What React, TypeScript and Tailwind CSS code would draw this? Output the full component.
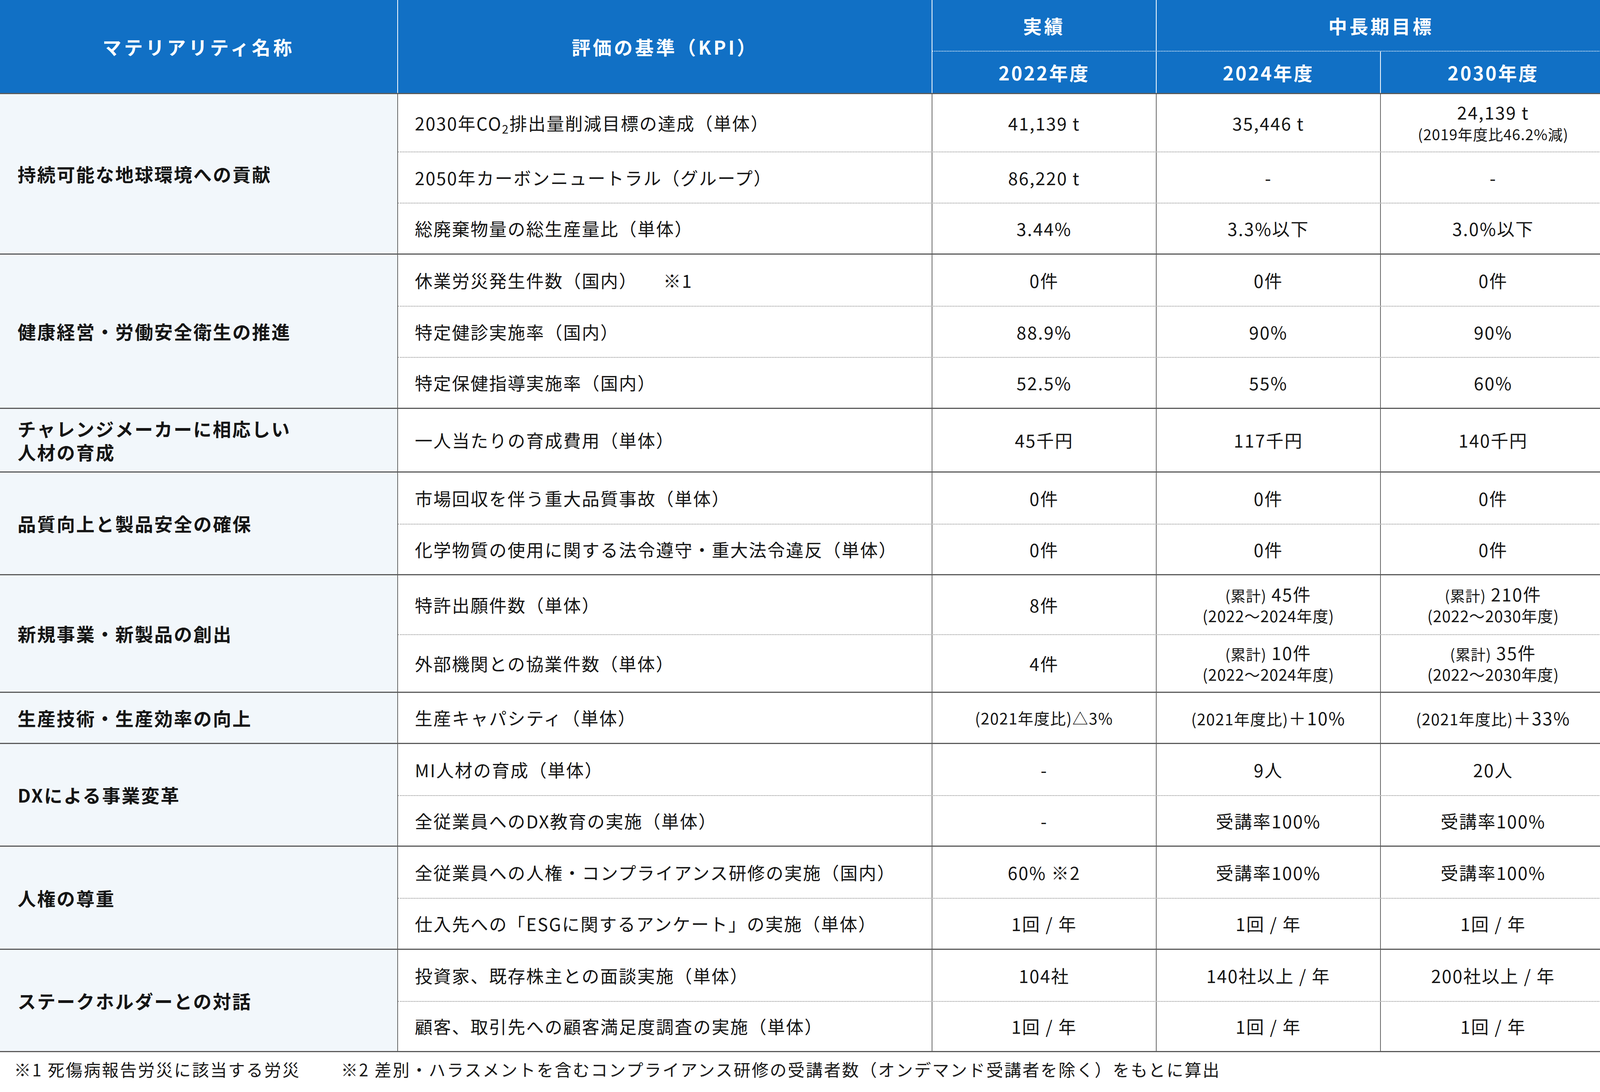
import React from "react";

type Cell = React.ReactNode;
type RowData = { h: string; kpi: Cell; v: [Cell, Cell, Cell] };
type Group = { label: Cell; rows: RowData[] };

const Pre = ({ children }: { children: React.ReactNode }) => (
  <span className="text-[40px] tracking-[1.5px]">{children}</span>
);

const Cum = ({ main, range }: { main: string; range: string }) => (
  <div className="flex flex-col items-center leading-[52px]">
    <div>
      <span className="text-[38px] tracking-[1px]">(累計)</span> {main}
    </div>
    <div className="text-[40px] tracking-[1px]">{range}</div>
  </div>
);

const groups: Group[] = [
  {
    label: "持続可能な地球環境への貢献",
    rows: [
      {
        h: "h-[147px]",
        kpi: (
          <>
            2030年CO<sub className="text-[30px] relative top-[8px] align-baseline">2</sub>排出量削減目標の達成（単体）
          </>
        ),
        v: [
          "41,139 t",
          "35,446 t",
          <div className="flex flex-col items-center leading-[56px]">
            <div>24,139 t</div>
            <div className="text-[38px] tracking-[1px]">(2019年度比46.2%減)</div>
          </div>,
        ],
      },
      { h: "h-[131px]", kpi: "2050年カーボンニュートラル（グループ）", v: ["86,220 t", "-", "-"] },
      { h: "h-[130px]", kpi: "総廃棄物量の総生産量比（単体）", v: ["3.44%", "3.3%以下", "3.0%以下"] },
    ],
  },
  {
    label: "健康経営・労働安全衛生の推進",
    rows: [
      {
        h: "h-[131px]",
        kpi: (
          <>
            休業労災発生件数（国内）<span className="ml-[66px]">※1</span>
          </>
        ),
        v: ["0件", "0件", "0件"],
      },
      { h: "h-[131px]", kpi: "特定健診実施率（国内）", v: ["88.9%", "90%", "90%"] },
      { h: "h-[130px]", kpi: "特定保健指導実施率（国内）", v: ["52.5%", "55%", "60%"] },
    ],
  },
  {
    label: (
      <>
        チャレンジメーカーに相応しい
        <br />
        人材の育成
      </>
    ),
    rows: [{ h: "h-[160px]", kpi: "一人当たりの育成費用（単体）", v: ["45千円", "117千円", "140千円"] }],
  },
  {
    label: "品質向上と製品安全の確保",
    rows: [
      { h: "h-[131px]", kpi: "市場回収を伴う重大品質事故（単体）", v: ["0件", "0件", "0件"] },
      { h: "h-[129px]", kpi: "化学物質の使用に関する法令遵守・重大法令違反（単体）", v: ["0件", "0件", "0件"] },
    ],
  },
  {
    label: "新規事業・新製品の創出",
    rows: [
      {
        h: "h-[151px]",
        kpi: "特許出願件数（単体）",
        v: ["8件", <Cum main="45件" range="(2022～2024年度)" />, <Cum main="210件" range="(2022～2030年度)" />],
      },
      {
        h: "h-[147px]",
        kpi: "外部機関との協業件数（単体）",
        v: ["4件", <Cum main="10件" range="(2022～2024年度)" />, <Cum main="35件" range="(2022～2030年度)" />],
      },
    ],
  },
  {
    label: "生産技術・生産効率の向上",
    rows: [
      {
        h: "h-[128px]",
        kpi: "生産キャパシティ（単体）",
        v: [
          <span className="text-[40px] tracking-[2px]">
            <Pre>(2021年度比)</Pre>△3%
          </span>,
          <span>
            <Pre>(2021年度比)</Pre>＋10%
          </span>,
          <span>
            <Pre>(2021年度比)</Pre>＋33%
          </span>,
        ],
      },
    ],
  },
  {
    label: "DXによる事業変革",
    rows: [
      { h: "h-[131px]", kpi: "MI人材の育成（単体）", v: ["-", "9人", "20人"] },
      { h: "h-[129px]", kpi: "全従業員へのDX教育の実施（単体）", v: ["-", "受講率100%", "受講率100%"] },
    ],
  },
  {
    label: "人権の尊重",
    rows: [
      { h: "h-[131px]", kpi: "全従業員への人権・コンプライアンス研修の実施（国内）", v: ["60% ※2", "受講率100%", "受講率100%"] },
      { h: "h-[130px]", kpi: "仕入先への「ESGに関するアンケート」の実施（単体）", v: ["1回 / 年", "1回 / 年", "1回 / 年"] },
    ],
  },
  {
    label: "ステークホルダーとの対話",
    rows: [
      { h: "h-[131px]", kpi: "投資家、既存株主との面談実施（単体）", v: ["104社", "140社以上 / 年", "200社以上 / 年"] },
      { h: "h-[128px]", kpi: "顧客、取引先への顧客満足度調査の実施（単体）", v: ["1回 / 年", "1回 / 年", "1回 / 年"] },
    ],
  },
];

export default function App() {
  return (
    <div className="w-[4110px] h-[2796px] overflow-hidden bg-white font-['Noto_Sans_CJK_JP','Noto_Sans_CJK_SC',sans-serif] text-[#151515] antialiased">
      {/* Header */}
      <div className="flex h-[241px] bg-[#1170c5] border-b-[3px] border-[#5a5a5a] text-white font-bold text-[48px] tracking-[6px]">
        <div className="w-[1019px] shrink-0 border-r-2 border-white flex items-center justify-center tracking-[7px]">マテリアリティ名称</div>
        <div className="w-[1368px] shrink-0 border-r-2 border-white flex items-center justify-center">評価の基準（KPI）</div>
        <div className="flex-1 flex flex-col">
          <div className="h-[132px] flex border-b-2 border-dotted border-white">
            <div className="w-[574px] shrink-0 border-r-2 border-white flex items-center justify-center">実績</div>
            <div className="flex-1 flex items-center justify-center">中長期目標</div>
          </div>
          <div className="flex-1 flex tracking-[4px]">
            <div className="w-[574px] shrink-0 border-r-2 border-white flex items-center justify-center">2022年度</div>
            <div className="w-[574px] shrink-0 border-r-2 border-white flex items-center justify-center">2024年度</div>
            <div className="flex-1 flex items-center justify-center">2030年度</div>
          </div>
        </div>
      </div>

      {/* Body */}
      {groups.map((g, gi) => (
        <div key={gi} className="flex border-b-[3px] border-[#5a5a5a]">
          <div className="w-[1019px] shrink-0 bg-[#f2f7fb] border-r-2 border-[#666] flex items-center pl-[45px] font-bold text-[47px] tracking-[3px] leading-[60px]">
            <div>{g.label}</div>
          </div>
          <div className="flex-1 flex flex-col">
            {g.rows.map((r, ri) => (
              <div
                key={ri}
                className={`flex ${r.h} text-[45px] tracking-[2.5px] ${ri > 0 ? "border-t-2 border-dotted border-[#8a8a8a]" : ""}`}
              >
                <div className="w-[1368px] shrink-0 border-r-2 border-[#666] flex items-center pl-[43px]">
                  <div>{r.kpi}</div>
                </div>
                <div className="w-[574px] shrink-0 border-r-2 border-[#666] flex items-center justify-center">{r.v[0]}</div>
                <div className="w-[574px] shrink-0 border-r-2 border-[#666] flex items-center justify-center">{r.v[1]}</div>
                <div className="flex-1 flex items-center justify-center">{r.v[2]}</div>
              </div>
            ))}
          </div>
        </div>
      ))}

      {/* Footnote */}
      <div className="flex items-center h-[86px] pl-[36px] text-[43px] tracking-[3.2px] text-[#1a1a1a]">
        <span>※1 死傷病報告労災に該当する労災</span>
        <span className="ml-[104px]">※2 差別・ハラスメントを含むコンプライアンス研修の受講者数（オンデマンド受講者を除く）をもとに算出</span>
      </div>
    </div>
  );
}
